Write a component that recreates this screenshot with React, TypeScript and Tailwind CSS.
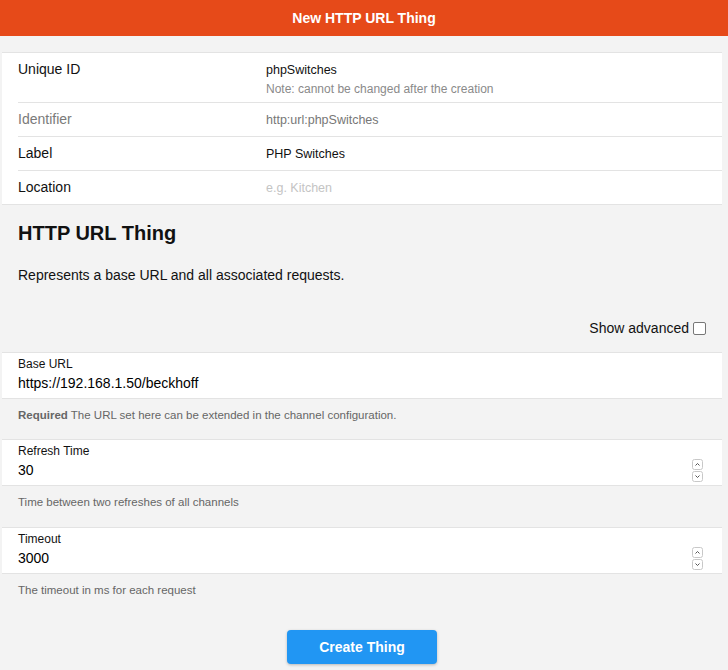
import React from 'react';

const font = { fontFamily: '"Liberation Sans", Arial, sans-serif' };

function Spinner() {
  return (
    <div className="flex flex-col gap-[1px]">
      <svg width="11" height="11" viewBox="0 0 11 11">
        <rect x="0.5" y="0.5" width="10" height="10" rx="2" fill="#fff" stroke="#c8c8c8" />
        <path d="M3.5 6.5 L5.5 4.5 L7.5 6.5" fill="none" stroke="#555" strokeWidth="1" />
      </svg>
      <svg width="11" height="11" viewBox="0 0 11 11">
        <rect x="0.5" y="0.5" width="10" height="10" rx="2" fill="#fff" stroke="#c8c8c8" />
        <path d="M3.5 4.5 L5.5 6.5 L7.5 4.5" fill="none" stroke="#555" strokeWidth="1" />
      </svg>
    </div>
  );
}

function Field({
  label,
  value,
  number,
  mt,
  children,
}: {
  label: string;
  value: string;
  number?: boolean;
  mt: string;
  children: React.ReactNode;
}) {
  return (
    <>
      <div className={`${mt} ml-[2px] mr-[6px] bg-white border-y border-[#e3e3e3] pl-4 pr-[19px] pt-[3px] pb-[5px]`}>
        <div className="text-[12px] leading-4 text-[#111]">{label}</div>
        <div className="mt-[1px] h-5 flex items-center justify-between">
          <span className="text-[14px] leading-5 text-black">{value}</span>
          {number && <Spinner />}
        </div>
      </div>
      <div className="mt-[8px] pl-[18px] text-[11.5px] leading-4 text-[#666]">{children}</div>
    </>
  );
}

export default function App() {
  const rows = [
    { label: 'Unique ID', value: 'phpSwitches', note: 'Note: cannot be changed after the creation' },
    { label: 'Identifier', value: 'http:url:phpSwitches', muted: true },
    { label: 'Label', value: 'PHP Switches' },
    { label: 'Location', value: 'e.g. Kitchen', placeholder: true },
  ];

  return (
    <div className="min-h-[670px] bg-[#f3f3f3] pb-4" style={font}>
      <header className="h-9 bg-[#e64a19] flex items-center justify-center text-white text-[14px] font-bold">
        New HTTP URL Thing
      </header>

      <div className="mt-4 ml-[2px] mr-[6px] bg-white border-y border-[#e3e3e3]">
        {rows.map((r, i) => (
          <div
            key={r.label}
            className={`ml-4 grid grid-cols-[248px_1fr] ${
              i === 0 ? 'h-[50px]' : i < rows.length - 1 ? 'h-[34px]' : 'h-[33px]'
            } ${i < rows.length - 1 ? 'border-b border-[#e3e3e3]' : ''}`}
          >
            <div className={`pt-[6px] text-[14px] leading-5 ${r.muted ? 'text-[#7a7a7a]' : 'text-[#111]'}`}>
              {r.label}
            </div>
            <div className="pt-[7px]">
              <div
                className={`text-[12.5px] leading-5 ${
                  r.placeholder ? 'text-[#c4c4c4]' : r.muted ? 'text-[#777]' : 'text-[#111]'
                }`}
              >
                {r.value}
              </div>
              {r.note && <div className="mt-[1px] text-[12px] leading-4 text-[#8a8a8a]">{r.note}</div>}
            </div>
          </div>
        ))}
      </div>

      <h2 className="mt-4 pl-[18px] text-[20px] leading-6 font-bold text-[#111]">HTTP URL Thing</h2>
      <p className="mt-5 pl-[18px] text-[14px] leading-5 text-[#111]">
        Represents a base URL and all associated requests.
      </p>

      <div className="mt-[33px] pr-[22px] flex items-center justify-end gap-1 text-[14px] leading-5 text-[#111]">
        <span>Show advanced</span>
        <span className="w-[13px] h-[13px] rounded-[2px] border border-[#777] bg-white" />
      </div>

      <Field label="Base URL" value="https://192.168.1.50/beckhoff" mt="mt-[14px]">
        <span className="font-bold">Required</span> The URL set here can be extended in the channel configuration.
      </Field>
      <Field label="Refresh Time" value="30" number mt="mt-4">
        Time between two refreshes of all channels
      </Field>
      <Field label="Timeout" value="3000" number mt="mt-[17px]">
        The timeout in ms for each request
      </Field>

      <div className="mt-[32px] ml-[2px] mr-[6px] flex justify-center">
        <button className="w-[150px] h-[34px] rounded bg-[#2196f3] text-white text-[14px] font-bold shadow-[0_1px_3px_rgba(0,0,0,0.25)]">
          Create Thing
        </button>
      </div>
    </div>
  );
}
